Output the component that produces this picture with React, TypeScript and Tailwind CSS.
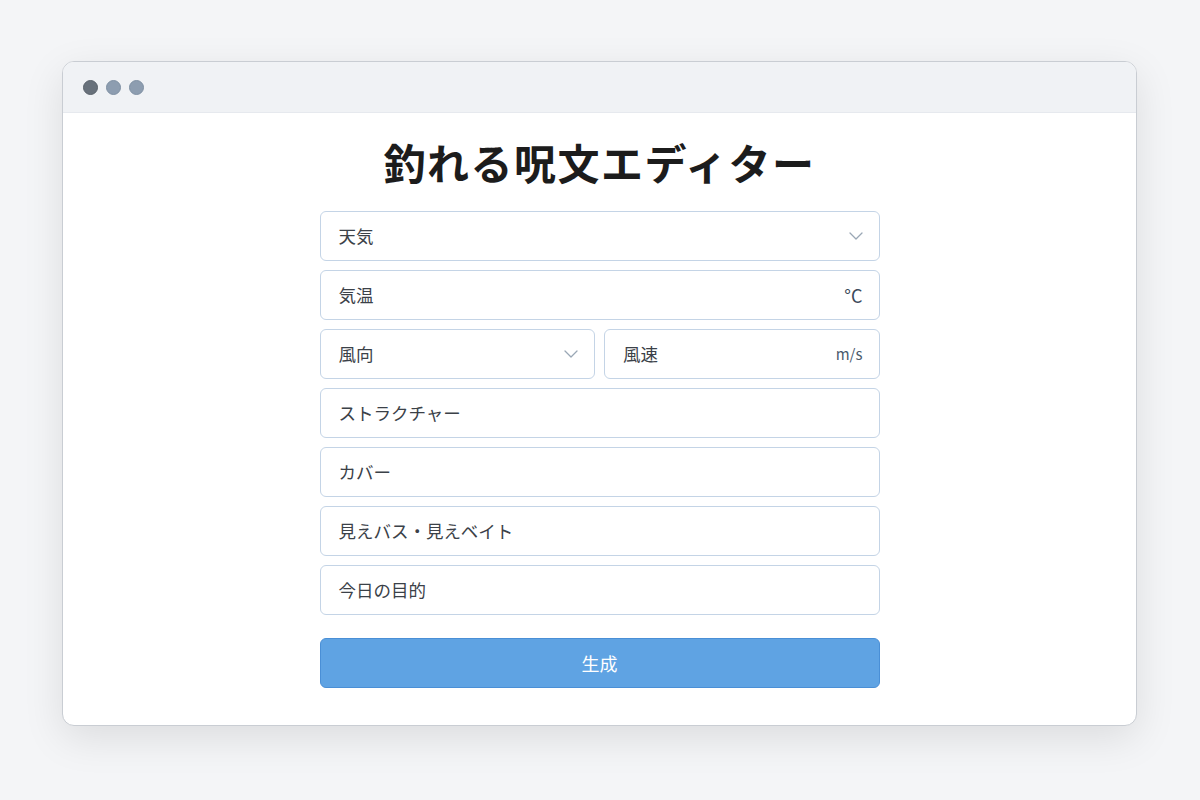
import React from "react";

const font = { fontFamily: '"Noto Sans CJK JP", "Noto Sans", sans-serif' };

function Chevron() {
  return (
    <svg width="14" height="8" viewBox="0 0 14 8" fill="none" className="shrink-0">
      <path d="M1 1l6 6 6-6" stroke="#9aa7b5" strokeWidth="1.3" strokeLinecap="round" strokeLinejoin="round" />
    </svg>
  );
}

function Field({ label, right }: { label: string; right?: React.ReactNode }) {
  return (
    <div className="flex-1 h-[50px] flex items-center justify-between pl-[18px] pr-[16px] bg-white border-[1.5px] border-[#c4d4e6] rounded-[6px]">
      <span className="text-[17.5px] text-[#3b4148]">{label}</span>
      {right}
    </div>
  );
}

export default function App() {
  return (
    <div className="w-[1200px] h-[800px] bg-[#f4f5f7] pt-[61px] pl-[62px]" style={font}>
      <div className="w-[1075px] h-[665px] bg-white rounded-[12px] border border-[#c9cdd3] shadow-[0_12px_40px_rgba(0,0,0,0.10)] overflow-hidden flex flex-col">
        <div className="h-[51px] bg-[#f0f2f5] border-b border-[#e6e9ee] flex items-center pl-[20px] gap-[8px]">
          <div className="w-[15px] h-[15px] rounded-full bg-[#68717b] border border-[#5a626b]" />
          <div className="w-[15px] h-[15px] rounded-full bg-[#8d9db0] border border-[#7f90a3]" />
          <div className="w-[15px] h-[15px] rounded-full bg-[#8d9db0] border border-[#7f90a3]" />
        </div>
        <div className="flex flex-col items-center">
          <h1 className="mt-[24px] text-[42px] leading-[50px] font-bold text-[#1c1c1c] tracking-[1.5px]">釣れる呪文エディター</h1>
          <div className="mt-[24px] w-[560px] flex flex-col gap-[9px]">
            <div className="flex"><Field label="天気" right={<Chevron />} /></div>
            <div className="flex"><Field label="気温" right={<span className="text-[18px] text-[#3b4a5a]">°C</span>} /></div>
            <div className="flex gap-[9px]">
              <Field label="風向" right={<Chevron />} />
              <Field label="風速" right={<span className="text-[15px] text-[#4a5a6c]">m/s</span>} />
            </div>
            <div className="flex"><Field label="ストラクチャー" /></div>
            <div className="flex"><Field label="カバー" /></div>
            <div className="flex"><Field label="見えバス・見えベイト" /></div>
            <div className="flex"><Field label="今日の目的" /></div>
            <button className="mt-[14px] h-[50px] w-full rounded-[6px] bg-[#5fa3e3] border border-[#4a8fd6] text-white text-[18px]">生成</button>
          </div>
        </div>
      </div>
    </div>
  );
}
